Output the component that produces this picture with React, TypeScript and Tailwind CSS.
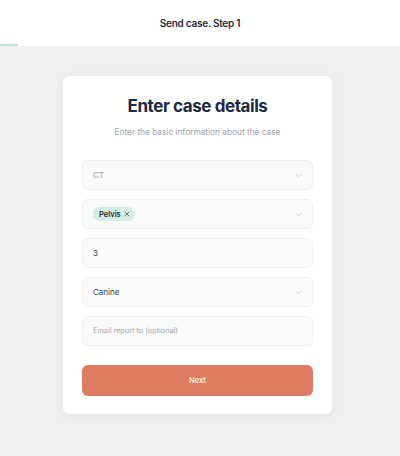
import { ChevronDown, X } from 'lucide-react'

function SelectField({ children }: { children: React.ReactNode }) {
  return (
    <div className="flex h-[30px] items-center justify-between rounded-md border border-[#f0f0f0] bg-[#fafafa] pl-[10px] pr-[8px]">
      <div className="flex items-center">{children}</div>
      <ChevronDown className="h-[11px] w-[11px] text-[#bfc2c7]" strokeWidth={1.5} />
    </div>
  )
}

export default function App() {
  return (
    <div className="flex h-[456px] w-[400px] flex-col bg-[#efefef] font-['Inter',sans-serif]">
      <header className="relative flex h-[46px] shrink-0 items-center justify-center bg-white">
        <h1 className="mt-[1px] text-[10px] font-semibold tracking-tight text-[#1f2937]">Send case. Step 1</h1>
        <div className="absolute bottom-0 left-0 h-[2px] w-[18px] bg-[#bfe3d6]" />
      </header>

      <main className="flex pl-[63px] pt-[30px]">
        <div className="w-[269px] rounded-md bg-white px-[19px] pb-[18px] pt-[19px] shadow-[0_2px_10px_rgba(0,0,0,0.05)]">
          <h2 className="text-center text-[17px] font-bold leading-[22px] tracking-tight text-[#1c2a44]">
            Enter case details
          </h2>
          <p className="mt-[9px] text-center text-[8.3px] text-[#9ca3af]">
            Enter the basic information about the case
          </p>

          <div className="mt-[22px] flex flex-col gap-[9px]">
            <SelectField>
              <span className="text-[8px] text-[#9ca3af]">CT</span>
            </SelectField>
            <SelectField>
              <span className="flex h-[14px] items-center gap-[2px] rounded-full bg-[#d5ece4] pl-[6px] pr-[4px] text-[7.5px] font-semibold text-[#1f2937]">
                Pelvis
                <X className="h-[8px] w-[8px]" strokeWidth={1.75} />
              </span>
            </SelectField>
            <div className="flex h-[30px] items-center rounded-md border border-[#f0f0f0] bg-[#fafafa] px-[10px] text-[8px] text-[#374151]">
              3
            </div>
            <SelectField>
              <span className="text-[8px] text-[#374151]">Canine</span>
            </SelectField>
            <div className="flex h-[30px] items-center rounded-md border border-[#f0f0f0] bg-[#fafafa] px-[10px] text-[7.3px] text-[#a3a7ae]">
              Email report to (optional)
            </div>
          </div>

          <button className="mt-[19px] flex h-[31px] w-full items-center justify-center rounded-md bg-[#e07b63] text-[7.5px] font-medium text-white">
            Next
          </button>
        </div>
      </main>
    </div>
  )
}
